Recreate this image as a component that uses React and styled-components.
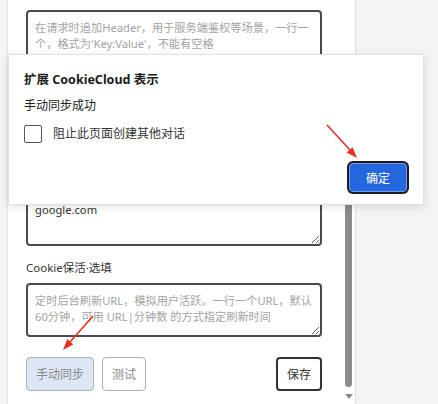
import React from 'react';
import styled, { createGlobalStyle } from 'styled-components';

const FONT = '"Noto Sans", "Noto Sans CJK SC", sans-serif';

const GlobalStyle = createGlobalStyle`
  html, body {
    margin: 0;
    padding: 0;
    background: #f3f3f3;
    font-family: ${FONT};
  }
  * {
    box-sizing: border-box;
  }
`;

const Page = styled.div`
  position: relative;
  display: flex;
  width: 438px;
  height: 404px;
  overflow: hidden;
  background: #f4f4f4;
`;

const Gutter = styled.div`
  width: 8px;
  border-right: 1px solid #e4e4e4;
`;

const Panel = styled.div`
  display: flex;
  width: 348px;
  background: #fff;
  border-right: 1px solid #dedede;
`;

const Content = styled.div`
  display: flex;
  flex-direction: column;
  width: 334px;
  padding: 10px 0 0 18px;
`;

const Label = styled.div`
  min-height: 18px;
  margin: 13px 0 6px;
  font-size: 11.5px;
  line-height: 18px;
  color: #333;
`;

const Area = styled.textarea`
  display: block;
  width: 296px;
  height: 54px;
  padding: 8px 7px;
  border: 2px solid #4a4a4a;
  border-radius: 4px;
  font-family: ${FONT};
  font-size: 11.2px;
  line-height: 16px;
  color: #333;
  background: #fff;
  overflow: hidden;
  outline: none;

  &::placeholder {
    color: #a3a3a3;
  }
`;

const Actions = styled.div`
  display: flex;
  align-items: center;
  gap: 8px;
  width: 296px;
  margin-top: 20px;
`;

const Button = styled.button`
  height: 34px;
  padding: 0 ${(p) => (p.$wide ? 13 : 9)}px;
  border-radius: 4px;
  font-family: ${FONT};
  font-size: 12px;
  cursor: pointer;
  background: ${(p) => (p.$variant === 'soft' ? '#dce6f5' : '#fff')};
  color: ${(p) => (p.$variant === 'strong' ? '#333' : '#8a8a8a')};
  border: ${(p) =>
    p.$variant === 'strong'
      ? '2px solid #333'
      : p.$variant === 'soft'
        ? '1.5px solid #a9b1bd'
        : '1.5px solid #b0b0b0'};
  margin-left: ${(p) => (p.$push ? 'auto' : '0')};
`;

const Track = styled.div`
  display: flex;
  flex-direction: column;
  align-items: center;
  width: 13px;
  padding: 70px 0 0;
`;

const Thumb = styled.div`
  width: 7px;
  height: 317px;
  border-radius: 4px;
  background: #8b8b8b;
`;

const DownArrow = styled.div`
  margin-top: 7px;
  width: 0;
  height: 0;
  border-left: 4px solid transparent;
  border-right: 4px solid transparent;
  border-top: 5px solid #8b8b8b;
`;

const Rest = styled.div`
  flex: 1;
`;

const Dialog = styled.div`
  position: absolute;
  left: 8px;
  top: 54px;
  width: 416px;
  height: 151px;
  padding: 16px 16px 13px 15px;
  background: #fff;
  border: 1px solid #e2e2e2;
  box-shadow: 0 2px 8px rgba(0, 0, 0, 0.12);
  display: flex;
  flex-direction: column;
  color: #202020;
`;

const Title = styled.div`
  font-size: 12.5px;
  font-weight: 700;
  line-height: 18px;
`;

const Message = styled.div`
  margin-top: 8px;
  font-size: 12px;
  line-height: 18px;
`;

const CheckRow = styled.label`
  display: flex;
  align-items: center;
  gap: 11px;
  margin-top: 10px;
  font-size: 12px;
  line-height: 18px;
  color: #333;
`;

const Box = styled.span`
  width: 18px;
  height: 18px;
  border: 1.5px solid #555;
  border-radius: 2px;
`;

const DialogFooter = styled.div`
  display: flex;
  justify-content: flex-end;
  margin-top: 20px;
`;

const OkButton = styled.button`
  width: 58px;
  height: 29px;
  border: 1px solid #6f9cf0;
  border-radius: 4px;
  box-shadow: 0 0 0 2px #1c1c1c;
  background: #2466de;
  color: #fff;
  font-family: ${FONT};
  font-size: 12px;
  cursor: pointer;
`;

const Marks = styled.svg`
  position: absolute;
  left: 0;
  top: 0;
  pointer-events: none;
`;

const RED = '#e63022';

export default function App() {
  return (
    <>
      <GlobalStyle />
      <Page>
        <Gutter />
        <Panel>
          <Content>
            <Area placeholder="在请求时追加Header，用于服务端鉴权等场景，一行一个，格式为'Key:Value'，不能有空格" />
            {/* these two fields sit under the dialog */}
            <Label />
            <Area />
            <Label />
            <Area defaultValue="google.com" />
            <Label>Cookie保活·选填</Label>
            <Area placeholder="定时后台刷新URL，模拟用户活跃。一行一个URL，默认60分钟，可用 URL|分钟数 的方式指定刷新时间" />
            <Actions>
              <Button $variant="soft">手动同步</Button>
              <Button>测试</Button>
              <Button $variant="strong" $push>保存</Button>
            </Actions>
          </Content>
          <Track>
            <Thumb />
            <DownArrow />
          </Track>
        </Panel>
        <Rest />

        <Dialog>
          <Title>扩展 CookieCloud 表示</Title>
          <Message>手动同步成功</Message>
          <CheckRow>
            <Box />
            阻止此页面创建其他对话
          </CheckRow>
          <DialogFooter>
            <OkButton>确定</OkButton>
          </DialogFooter>
        </Dialog>

        <Marks width="438" height="404" viewBox="0 0 438 404">
          <line x1="327" y1="125" x2="350" y2="150" stroke={RED} strokeWidth="1.6" />
          <polygon points="357,158 346.6,152.6 352.6,147.2" fill={RED} />
          <line x1="93" y1="316" x2="70" y2="342" stroke={RED} strokeWidth="1.6" />
          <polygon points="63,350 67.3,339.1 73.3,344.4" fill={RED} />
        </Marks>
      </Page>
    </>
  );
}
